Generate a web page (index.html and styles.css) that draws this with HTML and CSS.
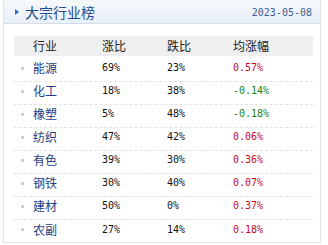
FILE: index.html
```html
<!DOCTYPE html>
<html lang="zh">
<head>
<meta charset="utf-8">
<title>大宗行业榜</title>
<link rel="stylesheet" href="styles.css">
</head>
<body>
<div class="panel">
  <div class="head">
    <div class="title"><span class="tri"></span><span>大宗行业榜</span></div>
    <div class="date">2023-05-08</div>
  </div>
  <div class="board">
    <div class="row th">
      <div class="c name">行业</div>
      <div class="c">涨比</div>
      <div class="c">跌比</div>
      <div class="c">均涨幅</div>
    </div>
    <div class="list">
      <div class="row"><div class="c name"><i class="dot"></i>能源</div><div class="c num">69%</div><div class="c num">23%</div><div class="c num up">0.57%</div></div>
      <div class="row"><div class="c name"><i class="dot"></i>化工</div><div class="c num">18%</div><div class="c num">38%</div><div class="c num down">-0.14%</div></div>
      <div class="row"><div class="c name"><i class="dot"></i>橡塑</div><div class="c num">5%</div><div class="c num">48%</div><div class="c num down">-0.18%</div></div>
      <div class="row"><div class="c name"><i class="dot"></i>纺织</div><div class="c num">47%</div><div class="c num">42%</div><div class="c num up">0.06%</div></div>
      <div class="row"><div class="c name"><i class="dot"></i>有色</div><div class="c num">39%</div><div class="c num">30%</div><div class="c num up">0.36%</div></div>
      <div class="row"><div class="c name"><i class="dot"></i>钢铁</div><div class="c num">30%</div><div class="c num">40%</div><div class="c num up">0.07%</div></div>
      <div class="row"><div class="c name"><i class="dot"></i>建材</div><div class="c num">50%</div><div class="c num">0%</div><div class="c num up">0.37%</div></div>
      <div class="row last"><div class="c name"><i class="dot"></i>农副</div><div class="c num">27%</div><div class="c num">14%</div><div class="c num up">0.18%</div></div>
    </div>
  </div>
</div>
</body>
</html>
```
FILE: styles.css
```css
html, body {
  margin: 0;
  padding: 0;
  background: #fff;
}
body {
  font-family: "Noto Sans CJK SC", "DejaVu Sans", sans-serif;
  font-size: 12px;
  color: #222;
}
.panel {
  margin-left: 3px;
  width: 316px;
  height: 242px;
  border: 1px solid #dfe4ec;
  border-top: 0;
}
.head {
  height: 23px;
  border-bottom: 1px solid #d4deeb;
  background: linear-gradient(#f6f9fc, #e9eff7);
  display: flex;
  align-items: center;
  justify-content: space-between;
  padding: 0 8px 0 11px;
}
.title {
  display: flex;
  align-items: center;
  gap: 6px;
  font-size: 14px;
  color: #1f4c8c;
  line-height: 16px;
  padding-top: 1px;
}
.tri {
  width: 0;
  height: 0;
  border-top: 3px solid transparent;
  border-bottom: 3px solid transparent;
  border-left: 4px solid #2c6cb8;
}
.date {
  font-family: "DejaVu Sans Mono", monospace;
  font-size: 10px;
  color: #3a5f98;
  padding-top: 2px;
}
.board {
  padding: 12px 7px 0 10px;
}
.row {
  display: grid;
  grid-template-columns: 88px 65px 66px 1fr;
  align-items: center;
}
.th {
  height: 20px;
  background: #efefef;
  color: #222;
  line-height: 20px;
}
.th .name {
  padding-left: 19px;
}
.list {
  margin-top: 3px;
}
.list .row {
  height: 22px;
  line-height: 18px;
  padding-bottom: 4px;
  box-sizing: border-box;
  height: 23px;
  border-bottom: 1px dashed #e2e2e2;
}
.list .row.last {
  border-bottom: 0;
}
.c.name {
  display: flex;
  align-items: center;
}
.list .name {
  padding-left: 7px;
  color: #1e3d82;
}
.dot {
  width: 3px;
  height: 3px;
  background: #cfcfcf;
  margin-right: 9px;
}
.num {
  font-family: "DejaVu Sans Mono", monospace;
  font-size: 10px;
  color: #111;
}
.up {
  color: #cc0a1e;
}
.down {
  color: #178417;
}
```
